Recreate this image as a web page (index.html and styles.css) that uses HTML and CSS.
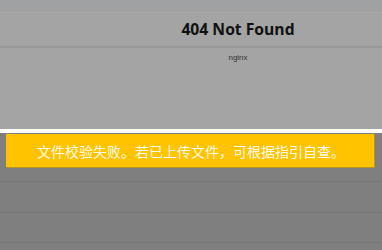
FILE: index.html
```html
<!DOCTYPE html>
<html lang="zh-CN">
<head>
<meta charset="utf-8">
<title>404</title>
<link rel="stylesheet" href="styles.css">
</head>
<body>
<div class="top">
  <div class="topbar"></div>
  <div class="frame">
    <div class="head"><h1 class="title">404 Not Found</h1></div>
    <div class="server">nginx</div>
  </div>
</div>
<div class="sep"></div>
<div class="lower">
  <div class="banner">文件校验失败。若已上传文件，可根据指引自查。</div>
  <div class="row r1"></div>
  <div class="row r2"></div>
  <div class="row r3"></div>
</div>
</body>
</html>
```
FILE: styles.css
```css
html, body {
  margin: 0;
  padding: 0;
}
body {
  width: 382px;
  height: 250px;
  overflow: hidden;
  background: #7f7f7f;
  font-family: "Open Sans", "Noto Sans", sans-serif;
}
.top {
  height: 129px;
  background: #a4a4a4;
  display: flex;
  flex-direction: column;
}
.topbar {
  height: 12px;
  background: #a0a1a3;
  border-bottom: 1px solid #a9a9a9;
}
.head {
  height: 33px;
  border-bottom: 2px solid #999999;
  display: flex;
  align-items: center;
  justify-content: center;
  padding-left: 94px;
}
.title {
  margin: 0;
  font-size: 15.7px;
  font-weight: 700;
  color: #111;
  line-height: 20px;
  padding-bottom: 2px;
}
.server {
  text-align: center;
  padding-left: 94px;
  font-family: "Liberation Sans", Arial, sans-serif;
  font-size: 8px;
  color: #333;
  line-height: 12px;
  padding-top: 4px;
}
.sep {
  height: 4px;
  background: #ffffff;
}
.lower {
  padding-top: 1px;
  display: flex;
  flex-direction: column;
}
.banner {
  margin: 0 8px 0 6px;
  height: 33px;
  background: #ffc300;
  box-shadow: 1px 1px 0 #b8951c;
  color: #fffbee;
  font-family: "Noto Sans CJK SC", "Noto Sans", sans-serif;
  font-size: 14px;
  display: flex;
  align-items: center;
  justify-content: center;
  padding-left: 2px;
}
.row {
  border-bottom: 1px solid #767676;
}
.r1 { height: 14px; }
.r2 { height: 30px; }
.r3 { height: 29px; }
```
